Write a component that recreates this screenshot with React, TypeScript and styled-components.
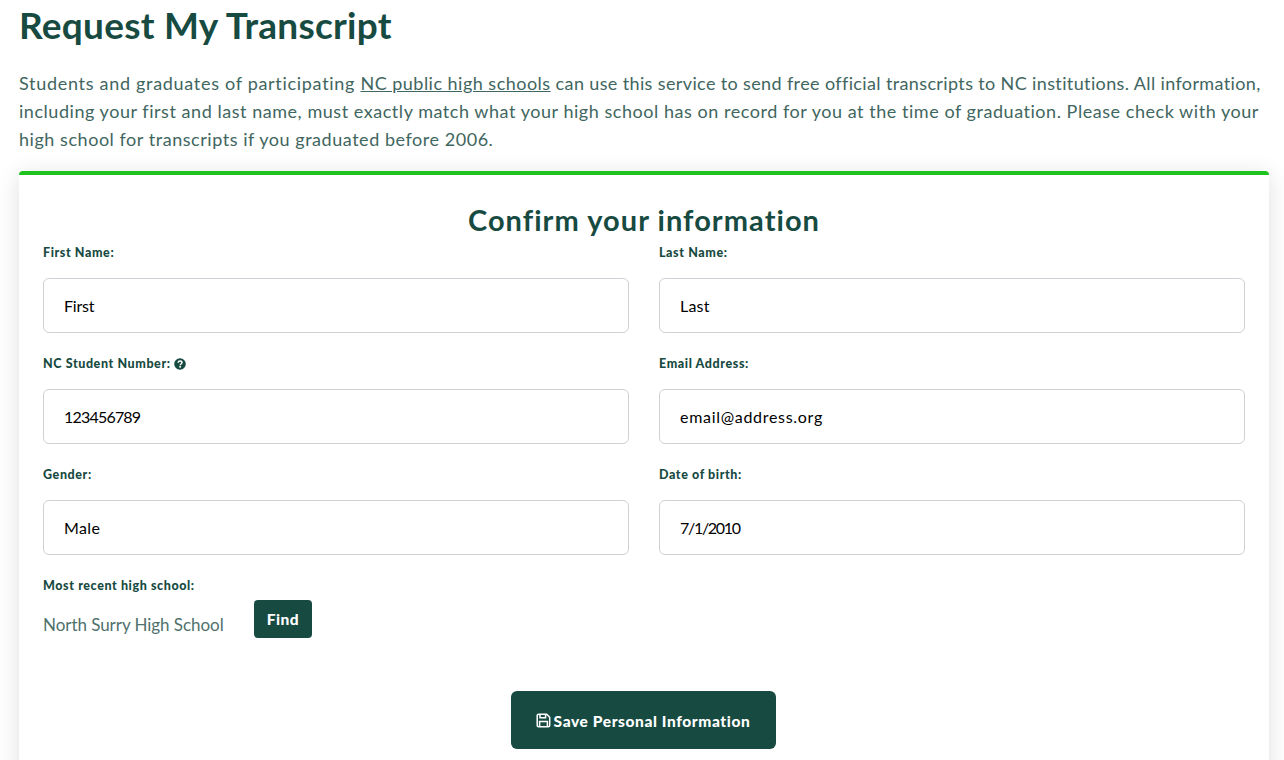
import React from "react";
import styled, { createGlobalStyle } from "styled-components";

const Global = createGlobalStyle`
  html, body { margin: 0; padding: 0; background: #fff; height: 760px; overflow: hidden; }
  * { box-sizing: border-box; }
  body { font-family: "Lato", "Liberation Sans", sans-serif; color: #174a41; }
`;
const Page = styled.main`
  padding: 0 15px 0 19px;
  height: 760px;
  overflow: hidden;
`;
const Title = styled.h1`
  margin: 0;
  padding-top: 3px;
  font-size: 37px;
  line-height: 44px;
  font-weight: 700;
  color: #174a41;
  letter-spacing: 0.25px;
`;
const Intro = styled.p`
  margin: 22px 0 0;
  font-size: 18px;
  line-height: 28px;
  color: #3f6660;
  letter-spacing: 0.54px;
  white-space: nowrap;
  a { color: inherit; text-decoration: underline; letter-spacing: 0.48px; }
`;
const IntroRun = styled.span<{ $tracking: number }>`
  letter-spacing: ${(p) => p.$tracking}px;
`;
const Card = styled.section`
  margin-top: 18px;
  background: #fff;
  border-top: 4px solid #1ec31e;
  border-radius: 4px;
  box-shadow: 0 4px 24px rgba(0, 0, 0, 0.13);
  padding: 27px 24px 40px;
  height: 620px;
`;
const CardTitle = styled.h2`
  margin: 0;
  text-align: center;
  font-size: 29px;
  line-height: 36px;
  font-weight: 700;
  letter-spacing: 1.05px;
  color: #174a41;
`;
const Grid = styled.div`
  display: grid;
  grid-template-columns: 586px 586px;
  column-gap: 30px;
  row-gap: 21.5px;
  margin-top: 5.5px;
`;
const Field = styled.div`
  display: flex;
  flex-direction: column;
`;
const Label = styled.label`
  display: flex;
  align-items: center;
  gap: 3px;
  font-size: 12.5px;
  line-height: 18px;
  font-weight: 900;
  color: #174a41;
  letter-spacing: 0.6px;
  margin-bottom: 16.5px;
`;
const Input = styled.input<{ $tracking: number }>`
  height: 55px;
  width: 100%;
  border: 1px solid #cfd0d6;
  border-radius: 6px;
  padding: 0 20px;
  background: #fff;
  font-family: inherit;
  font-size: 16px;
  color: #000;
  letter-spacing: ${(p) => p.$tracking}px;
  outline: none;
`;
const SchoolRow = styled.div`
  display: flex;
  align-items: center;
  margin-top: -11px;
`;
const SchoolName = styled.span`
  font-size: 17px;
  color: #4f716c;
  letter-spacing: -0.05px;
  width: 211px;
  margin-top: 10px;
`;
const FindButton = styled.button`
  width: 58px;
  height: 38px;
  border: 0;
  border-radius: 4px;
  background: #174a41;
  color: #fff;
  font-family: inherit;
  font-size: 15.5px;
  font-weight: 900;
  letter-spacing: 0.5px;
  padding: 0;
`;
const Actions = styled.div`
  display: flex;
  justify-content: center;
  margin-top: 53px;
  padding-right: 2px;
`;
const SaveButton = styled.button`
  width: 265px;
  height: 58px;
  border: 0;
  border-radius: 6px;
  background: #174a41;
  color: #fff;
  font-family: inherit;
  font-size: 15.5px;
  font-weight: 900;
  letter-spacing: 0.6px;
  display: flex;
  align-items: center;
  justify-content: center;
  gap: 3px;
  padding: 1px 0 0;
`;

const HelpIcon = () => (
  <svg width="12" height="12" viewBox="0 0 12 12" aria-hidden="true">
    <circle cx="6" cy="6" r="5.8" fill="#174a41" />
    <path d="M4.1 4.7C4.2 3.5 5 2.9 6.1 2.9c1.2 0 1.9.7 1.9 1.7 0 1.4-1.8 1.4-1.8 2.6" fill="none" stroke="#fff" strokeWidth="1.5" />
    <rect x="5.3" y="8" width="1.7" height="1.6" fill="#fff" />
  </svg>
);
const SaveIcon = () => (
  <svg width="15" height="15" viewBox="0 0 15 15" fill="none" stroke="#fff" strokeWidth="1.5" aria-hidden="true">
    <path d="M1.2 2.6c0-.8.6-1.4 1.4-1.4h8.1l3 3v8.2c0 .8-.6 1.4-1.4 1.4H2.6c-.8 0-1.4-.6-1.4-1.4z" />
    <path d="M4 1.4v3.3h5.6V1.4" />
    <path d="M3.6 13.6V8.4h7.8v5.2" />
  </svg>
);

const fields = [
  { label: "First Name:", value: "First", tracking: -0.2 },
  { label: "Last Name:", value: "Last", tracking: 0.2 },
  { label: "NC Student Number:", value: "123456789", help: true, tracking: -0.8 },
  { label: "Email Address:", value: "email@address.org", tracking: 0.7 },
  { label: "Gender:", value: "Male", tracking: 0.4 },
  { label: "Date of birth:", value: "7/1/2010", tracking: -1.3 },
];

export default function App() {
  return (
    <Page>
      <Global />
      <Title>Request My Transcript</Title>
      <Intro>
        <IntroRun $tracking={0.7}>Students and graduates of participating </IntroRun>
        <a href="#schools">NC public high schools</a>
        <IntroRun $tracking={0.37}> can use this service to send free official transcripts to NC institutions. All information,</IntroRun>
        <br />
        including your first and last name, must exactly match what your high school has on record for you at the time of graduation. Please check with your
        <br />
        high school for transcripts if you graduated before 2006.
      </Intro>
      <Card>
        <CardTitle>Confirm your information</CardTitle>
        <Grid>
          {fields.map((f) => (
            <Field key={f.label}>
              <Label>
                {f.label}
                {f.help && <HelpIcon />}
              </Label>
              <Input defaultValue={f.value} readOnly $tracking={f.tracking} />
            </Field>
          ))}
          <Field>
            <Label>Most recent high school:</Label>
            <SchoolRow>
              <SchoolName>North Surry High School</SchoolName>
              <FindButton>Find</FindButton>
            </SchoolRow>
          </Field>
        </Grid>
        <Actions>
          <SaveButton>
            <SaveIcon />
            Save Personal Information
          </SaveButton>
        </Actions>
      </Card>
    </Page>
  );
}
